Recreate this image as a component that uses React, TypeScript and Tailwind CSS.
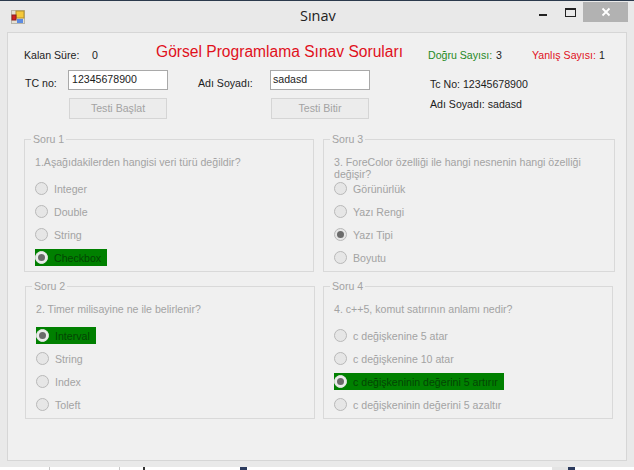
const font = "font-['Liberation_Sans',Arial,sans-serif]";

type Soru = {
  title: string;
  question: string;
  options: string[];
  selected: number;
  green: boolean;
  questionTall?: boolean;
};

const left: Soru[] = [
  {
    title: "Soru 1",
    question: "1.Aşağıdakilerden hangisi veri türü değildir?",
    options: ["Integer", "Double", "String", "Checkbox"],
    selected: 3,
    green: true,
  },
  {
    title: "Soru 2",
    question: "2. Timer milisayine ne ile belirlenir?",
    options: ["Interval", "String", "Index", "Toleft"],
    selected: 0,
    green: true,
  },
];

const right: Soru[] = [
  {
    title: "Soru 3",
    question: "3. ForeColor özelliği ile hangi nesnenin hangi özelliği değişir?",
    options: ["Görünürlük", "Yazı Rengi", "Yazı Tipi", "Boyutu"],
    selected: 2,
    green: false,
    questionTall: true,
  },
  {
    title: "Soru 4",
    question: "4. c++5, komut satırının anlamı nedir?",
    options: [
      "c değişkenine 5 atar",
      "c değişkenine 10 atar",
      "c değişkeninin değerini 5 artırır",
      "c değişkeninin değerini 5 azaltır",
    ],
    selected: 2,
    green: true,
  },
];

function Radio({ label, checked, green }: { label: string; checked: boolean; green: boolean }) {
  const hilite = checked && green;
  return (
    <div
      className={`flex h-[17px] w-fit items-center gap-[6px] pr-[6px] ${hilite ? "bg-[#008000] text-[#044504]" : "text-[#a3a3a3]"}`}
    >
      <span
        className={`flex size-[13px] items-center justify-center rounded-full border ${hilite ? "border-[#e4e4e4] bg-[#ececec]" : "border-[#b9b9b9] bg-[#e6e6e6]"}`}
      >
        {checked && <span className="size-[7px] rounded-full bg-[#6b6b6b]" />}
      </span>
      <span className="whitespace-nowrap">{label}</span>
    </div>
  );
}

function Group({ soru, className }: { soru: Soru; className: string }) {
  return (
    <fieldset className={`h-[140px] w-[290px] border border-[#d9d9d9] px-[10px] ${className}`}>
      <legend className="ml-[-4px] h-[14px] px-[2px] leading-[14px] text-[#a3a3a3]">{soru.title}</legend>
      <div
        className={`leading-[12px] text-[#a3a3a3] ${soru.questionTall ? "mt-[10px] h-[24px] w-[270px]" : "mt-[8px] h-[26px] pt-[2px]"}`}
      >
        {soru.question}
      </div>
      <div className="flex flex-col gap-[6px]">
        {soru.options.map((o, i) => (
          <Radio key={o} label={o} checked={i === soru.selected} green={soru.green} />
        ))}
      </div>
    </fieldset>
  );
}

function AppIcon() {
  return (
    <svg width="14" height="14" viewBox="0 0 14 14" className="ml-[11px] mt-[9px]">
      <rect x="0.5" y="0.5" width="13" height="13" fill="#e4e0d4" stroke="#b9b6aa" />
      <rect x="5" y="1" width="8" height="7" fill="#f5c93a" stroke="#b38f2a" />
      <rect x="1" y="5" width="4" height="5" fill="#d42020" stroke="#8a2020" />
      <rect x="6" y="9" width="6" height="4" fill="#5d8be0" />
    </svg>
  );
}

export default function App() {
  return (
    <div className={`flex h-[470px] w-[634px] flex-col overflow-hidden bg-[#e9e9e9] text-[10.6px] leading-[14px] text-[#1c1c1c] ${font}`}>
      <div className="h-[1px] bg-[#2b3a4d]" />
      {/* title bar */}
      <div className="relative flex h-[31px] items-start">
        <AppIcon />
        <div className="flex-1 pt-[5px] pl-[275px] font-['Open_Sans',sans-serif] text-[14.5px] leading-[20px] text-[#222]">
          Sınav
        </div>
        <div className="mr-[6px] flex items-start">
          <div className="mt-[13px] mr-[18px] h-[2px] w-[8px] bg-[#222]" />
          <div className="mt-[7px] mr-[7px] h-[9px] w-[11px] border border-t-2 border-[#222]" />
          <div className="mt-[1px] flex h-[20px] w-[45px] items-center justify-center bg-[#b2b2b2]">
            <svg width="10" height="10" viewBox="0 0 10 10">
              <path d="M1.5 1.5 8.5 8.5M8.5 1.5 1.5 8.5" stroke="#fff" strokeWidth="1.8" />
            </svg>
          </div>
        </div>
      </div>

      {/* client area */}
      <div className="mx-[7px] h-[429px] border border-[#d6d6d6] bg-[#f0f0f0] pl-[16px]">
        <div className="flex h-[99px] flex-col">
          <div className="flex h-[33px] items-end pb-[3px]">
            <div className="w-[68px] pb-[1px]">Kalan Süre:</div>
            <div className="w-[64px] pb-[1px]">0</div>
            <div className="w-[272px] pb-[1px] text-[15.6px] leading-[20px] text-[#e0101c]">Görsel Programlama Sınav Soruları</div>
            <div className="w-[68px] pb-[1px] text-[#1f8a1f] whitespace-nowrap">Doğru Sayısı:</div>
            <div className="w-[36px] pb-[1px]">3</div>
            <div className="w-[67px] pb-[1px] text-[#e0101c] whitespace-nowrap">Yanlış Sayısı:</div>
            <div className="pb-[1px]">1</div>
          </div>
          <div className="flex h-[28px] items-center">
            <div className="ml-[1px] mt-[6px] w-[43px]">TC no:</div>
            <div className="h-[20px] w-[100px] border border-[#a9a9a9] bg-white pl-[3px] pt-[1px] leading-[15px]">12345678900</div>
            <div className="ml-[30px] mt-[6px] w-[72px] whitespace-nowrap">Adı Soyadı:</div>
            <div className="h-[20px] w-[100px] border border-[#a9a9a9] bg-white pl-[2px] pt-[1px] leading-[15px]">sadasd</div>
            <div className="ml-[60px] mt-[7px] whitespace-nowrap">Tc No: 12345678900</div>
          </div>
          <div className="flex h-[28px] items-center">
            <div className="ml-[45px] flex h-[21px] w-[98px] items-center justify-center border border-[#d5d5d5] bg-[#ececec] text-[#a3a3a3]">Testi Başlat</div>
            <div className="ml-[104px] flex h-[21px] w-[98px] items-center justify-center border border-[#d5d5d5] bg-[#ececec] text-[#a3a3a3]">Testi Bitir</div>
            <div className="ml-[61px] mb-[8px] whitespace-nowrap">Adı Soyadı: sadasd</div>
          </div>
        </div>

        <div className="flex">
          <div className="w-[299px]">
            {left.map((s) => (
              <Group key={s.title} soru={s} className={s.title === "Soru 2" ? "mt-[7px] ml-[1px]" : ""} />
            ))}
          </div>
          <div>
            {right.map((s) => (
              <Group key={s.title} soru={s} className={s.title === "Soru 4" ? "mt-[7px]" : ""} />
            ))}
          </div>
        </div>
      </div>

      {/* whatever is behind the window */}
      <div className="mt-[6px] flex flex-1 bg-white">
        <div className="ml-[49px] w-[1px] bg-[#c8c8c8]" />
        <div className="ml-[69px] w-[1px] bg-[#c8c8c8]" />
        <div className="ml-[23px] w-[2px] bg-[#333]" />
        <div className="ml-[95px] w-[7px] bg-[#2b3a5d]" />
        <div className="ml-[305px] w-[16px] bg-[#e4e4e4]" />
        <div className="w-[7px] bg-[#2b3a5d]" />
      </div>
    </div>
  );
}
